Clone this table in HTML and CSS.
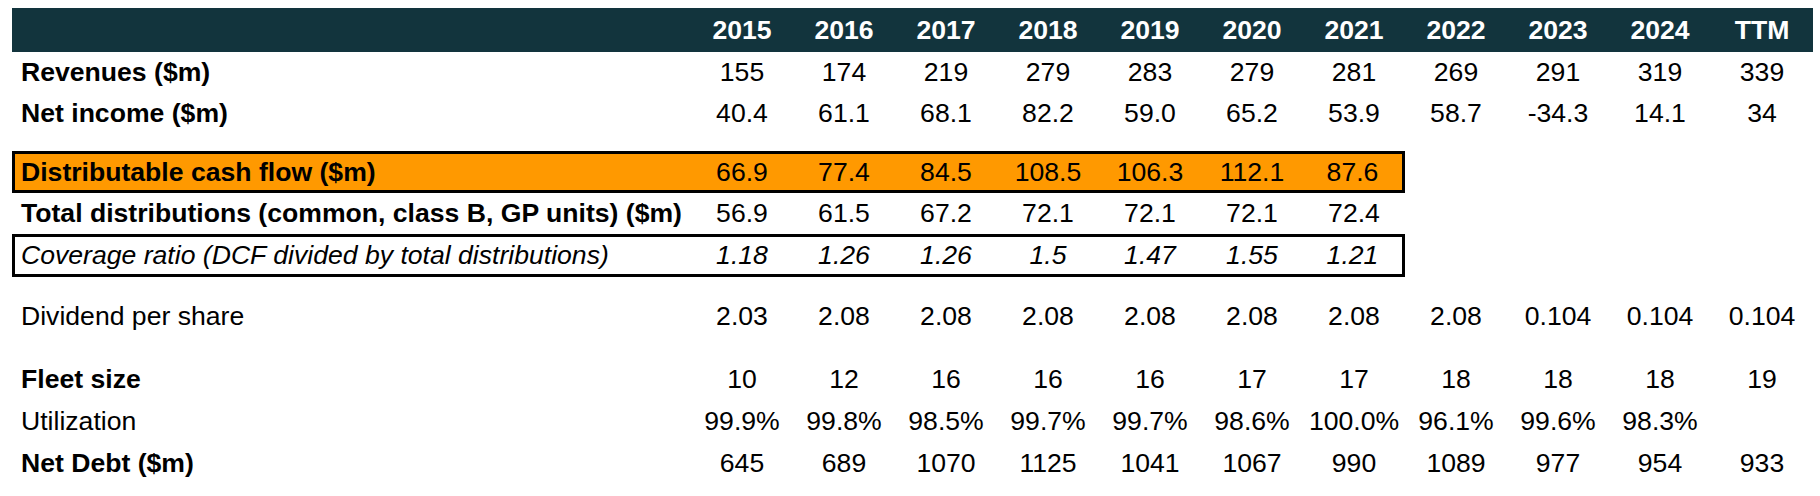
FILE: index.html
```html
<!DOCTYPE html>
<html>
<head>
<meta charset="utf-8">
<link rel="stylesheet" href="styles.css">
</head>
<body>
<div class="sheet">
  <div class="row head">
    <div class="label"></div>
    <div class="c">2015</div><div class="c">2016</div><div class="c">2017</div><div class="c">2018</div><div class="c">2019</div><div class="c">2020</div><div class="c">2021</div><div class="c">2022</div><div class="c">2023</div><div class="c">2024</div><div class="c">TTM</div>
  </div>
  <div class="row r41">
    <div class="label b">Revenues ($m)</div>
    <div class="c">155</div><div class="c">174</div><div class="c">219</div><div class="c">279</div><div class="c">283</div><div class="c">279</div><div class="c">281</div><div class="c">269</div><div class="c">291</div><div class="c">319</div><div class="c">339</div>
  </div>
  <div class="row r41">
    <div class="label b">Net income ($m)</div>
    <div class="c">40.4</div><div class="c">61.1</div><div class="c">68.1</div><div class="c">82.2</div><div class="c">59.0</div><div class="c">65.2</div><div class="c">53.9</div><div class="c">58.7</div><div class="c">-34.3</div><div class="c">14.1</div><div class="c">34</div>
  </div>
  <div class="gap g17"></div>
  <div class="box orange">
    <div class="label b">Distributable cash flow ($m)</div>
    <div class="c">66.9</div><div class="c">77.4</div><div class="c">84.5</div><div class="c">108.5</div><div class="c">106.3</div><div class="c">112.1</div><div class="c">87.6</div>
  </div>
  <div class="row r41">
    <div class="label b">Total distributions (common, class B, GP units) ($m)</div>
    <div class="c">56.9</div><div class="c">61.5</div><div class="c">67.2</div><div class="c">72.1</div><div class="c">72.1</div><div class="c">72.1</div><div class="c">72.4</div>
  </div>
  <div class="box plain">
    <div class="label i">Coverage ratio (DCF divided by total distributions)</div>
    <div class="c i">1.18</div><div class="c i">1.26</div><div class="c i">1.26</div><div class="c i">1.5</div><div class="c i">1.47</div><div class="c i">1.55</div><div class="c i">1.21</div>
  </div>
  <div class="gap g19"></div>
  <div class="row r41">
    <div class="label">Dividend per share</div>
    <div class="c">2.03</div><div class="c">2.08</div><div class="c">2.08</div><div class="c">2.08</div><div class="c">2.08</div><div class="c">2.08</div><div class="c">2.08</div><div class="c">2.08</div><div class="c">0.104</div><div class="c">0.104</div><div class="c">0.104</div>
  </div>
  <div class="gap g21"></div>
  <div class="row r42">
    <div class="label b">Fleet size</div>
    <div class="c">10</div><div class="c">12</div><div class="c">16</div><div class="c">16</div><div class="c">16</div><div class="c">17</div><div class="c">17</div><div class="c">18</div><div class="c">18</div><div class="c">18</div><div class="c">19</div>
  </div>
  <div class="row r42">
    <div class="label">Utilization</div>
    <div class="c">99.9%</div><div class="c">99.8%</div><div class="c">98.5%</div><div class="c">99.7%</div><div class="c">99.7%</div><div class="c">98.6%</div><div class="c">100.0%</div><div class="c">96.1%</div><div class="c">99.6%</div><div class="c">98.3%</div><div class="c"></div>
  </div>
  <div class="row r42">
    <div class="label b">Net Debt ($m)</div>
    <div class="c">645</div><div class="c">689</div><div class="c">1070</div><div class="c">1125</div><div class="c">1041</div><div class="c">1067</div><div class="c">990</div><div class="c">1089</div><div class="c">977</div><div class="c">954</div><div class="c">933</div>
  </div>
</div>
</body>
</html>
```

FILE: styles.css
```css
html, body {
  margin: 0;
  padding: 0;
  background: #ffffff;
}

.sheet {
  padding: 8px 0 0 12px;
  font-family: "Liberation Sans", Arial, sans-serif;
  font-size: 26.6px;
  color: #000000;
  width: 1801px;
}

.row {
  display: grid;
  grid-template-columns: 679px repeat(11, 102px);
}

.head {
  height: 44px;
  line-height: 44px;
  background: #12343d;
  color: #ffffff;
  font-weight: bold;
}

.r41 {
  height: 41px;
  line-height: 41px;
}

.r42 {
  height: 42px;
  line-height: 42px;
}

.gap.g17 { height: 17px; }
.gap.g19 { height: 19px; }
.gap.g21 { height: 21px; }

.label {
  padding-left: 9px;
  white-space: nowrap;
}

.c {
  text-align: center;
  white-space: nowrap;
}

.b { font-weight: bold; }
.i { font-style: italic; }

.box {
  display: grid;
  grid-template-columns: 676px repeat(6, 102px) 99px;
  width: 1393px;
  box-sizing: border-box;
  border: 3px solid #000000;
}

.box .label {
  padding-left: 6px;
}

.box.orange {
  height: 42px;
  line-height: 36px;
  background: #ff9900;
}

.box.plain {
  height: 43px;
  line-height: 37px;
  background: #ffffff;
}
```
